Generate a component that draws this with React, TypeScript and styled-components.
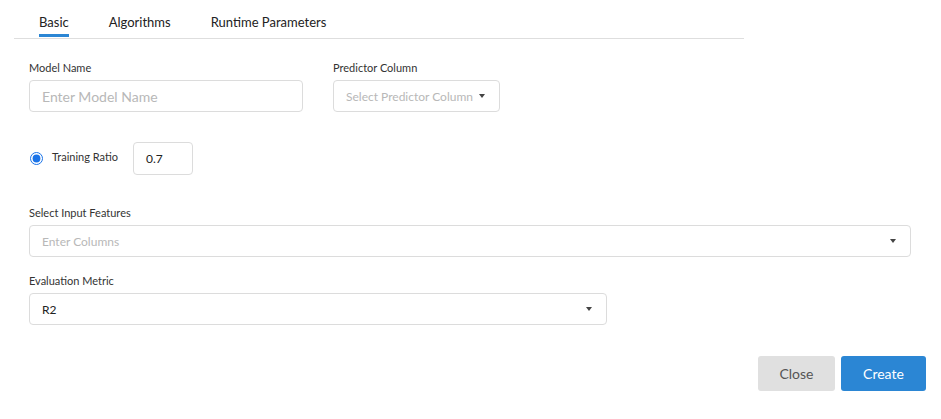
import React from "react";
import styled, { createGlobalStyle } from "styled-components";

const Global = createGlobalStyle`
  html, body { margin: 0; padding: 0; background: #fff; }
  body { font-family: Lato, "Open Sans", sans-serif; color: #333; }
  * { box-sizing: border-box; }
`;

const Page = styled.div`
  width: 941px;
  height: 419px;
  display: flex;
  flex-direction: column;
`;

const TabBar = styled.div`
  margin-left: 14px;
  width: 730px;
  height: 39px;
  border-bottom: 1px solid #dedede;
  display: flex;
  gap: 40px;
  padding-left: 25px;
`;

const Tab = styled.div<{ $active?: boolean }>`
  padding-top: 14px;
  font-size: 13px;
  line-height: 16px;
  color: #222;
  border-bottom: ${(p) => (p.$active ? "3px solid #2b86d4" : "none")};
  height: ${(p) => (p.$active ? "37px" : "38px")};
`;

const Form = styled.div`
  padding: 0 30px 0 29px;
  display: flex;
  flex-direction: column;
`;

const Row = styled.div<{ $mt: number }>`
  display: flex;
  align-items: flex-start;
  margin-top: ${(p) => p.$mt}px;
`;

const Field = styled.div<{ $w: string; $ml?: number }>`
  display: flex;
  flex-direction: column;
  width: ${(p) => p.$w};
  margin-left: ${(p) => p.$ml ?? 0}px;
`;

const Label = styled.label`
  font-size: 11px;
  line-height: 14px;
  color: #333;
  margin-bottom: 5px;
`;

const Box = styled.div<{ $h?: number }>`
  height: ${(p) => p.$h ?? 32}px;
  border: 1px solid #dcdcdc;
  border-radius: 4px;
  display: flex;
  align-items: center;
  padding: 0 14px 0 12px;
  background: #fff;
`;

const Text = styled.span<{ $ph?: boolean; $size?: number }>`
  flex: 1;
  font-size: ${(p) => p.$size ?? 12}px;
  color: ${(p) => (p.$ph ? "#b8b8b8" : "#222")};
  white-space: nowrap;
`;

const Caret = styled.span`
  width: 0;
  height: 0;
  border-left: 3px solid transparent;
  border-right: 3px solid transparent;
  border-top: 4px solid #444;
  margin-left: 6px;
`;

const RatioRow = styled.div`
  display: flex;
  align-items: center;
  margin-top: 30px;
  height: 32px;
`;

const Radio = styled.input`
  accent-color: #1a73e8;
  width: 13px;
  height: 13px;
  margin: 1px 0 0 1px;
`;

const RadioLabel = styled.span`
  font-size: 11px;
  color: #333;
  margin-left: 9px;
  margin-top: -3px;
`;

const SmallBox = styled(Box)`
  width: 60px;
  margin-left: 15px;
`;

const Footer = styled.div`
  display: flex;
  justify-content: flex-end;
  gap: 6px;
  padding-right: 15px;
  margin-top: 31px;
`;

const Button = styled.button<{ $primary?: boolean }>`
  height: 35px;
  width: ${(p) => (p.$primary ? 85 : 77)}px;
  border: none;
  border-radius: 3px;
  font-family: Lato, sans-serif;
  font-size: 14px;
  background: ${(p) => (p.$primary ? "#2b86d4" : "#e0e0e0")};
  color: ${(p) => (p.$primary ? "#fff" : "#555")};
`;

export default function App() {
  return (
    <Page>
      <Global />
      <TabBar>
        <Tab $active>Basic</Tab>
        <Tab>Algorithms</Tab>
        <Tab>Runtime Parameters</Tab>
      </TabBar>
      <Form>
        <Row $mt={22}>
          <Field $w="274px">
            <Label>Model Name</Label>
            <Box>
              <Text $ph $size={14}>Enter Model Name</Text>
            </Box>
          </Field>
          <Field $w="167px" $ml={30}>
            <Label>Predictor Column</Label>
            <Box>
              <Text $ph $size={12}>Select Predictor Column</Text>
              <Caret />
            </Box>
          </Field>
        </Row>
        <RatioRow>
          <Radio type="radio" defaultChecked name="ratio" />
          <RadioLabel>Training Ratio</RadioLabel>
          <SmallBox $h={33}>
            <Text>0.7</Text>
          </SmallBox>
        </RatioRow>
        <Row $mt={32}>
          <Field $w="882px">
            <Label>Select Input Features</Label>
            <Box>
              <Text $ph $size={12}>Enter Columns</Text>
              <Caret />
            </Box>
          </Field>
        </Row>
        <Row $mt={17}>
          <Field $w="578px">
            <Label>Evaluation Metric</Label>
            <Box>
              <Text>R2</Text>
              <Caret />
            </Box>
          </Field>
        </Row>
      </Form>
      <Footer>
        <Button>Close</Button>
        <Button $primary>Create</Button>
      </Footer>
    </Page>
  );
}
